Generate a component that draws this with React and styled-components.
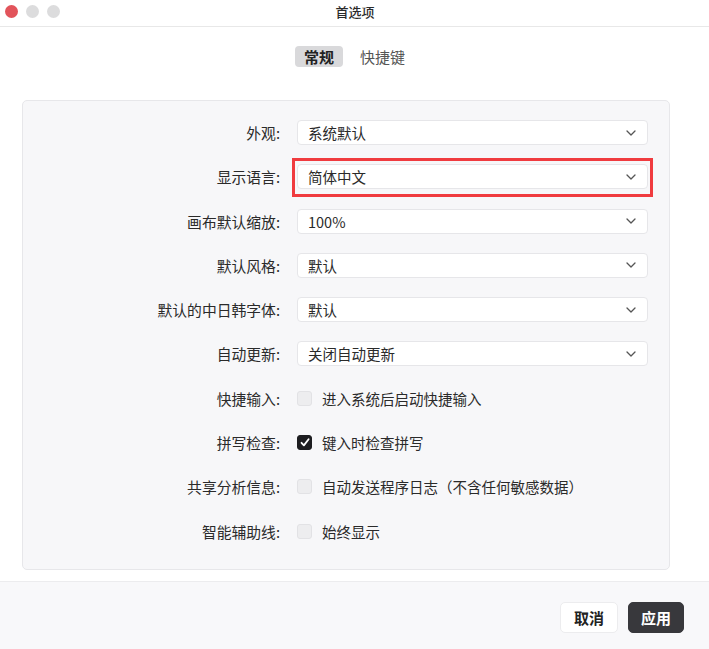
import React from 'react';
import styled, { createGlobalStyle } from 'styled-components';

const GlobalStyle = createGlobalStyle`
  html, body {
    margin: 0;
    padding: 0;
    background: #ffffff;
  }
  body {
    font-family: "Noto Sans CJK SC", "Noto Sans", "Liberation Sans", sans-serif;
    color: #2a2a2a;
  }
`;

const Window = styled.div`
  width: 709px;
  height: 649px;
  background: #ffffff;
  display: flex;
  flex-direction: column;
  overflow: hidden;
`;

const TitleBar = styled.div`
  height: 26px;
  flex-shrink: 0;
  border-bottom: 1px solid #e8e8e8;
  display: grid;
  grid-template-columns: 1fr auto 1fr;
  align-items: center;
  padding: 0 4px 0 5px;
`;

const Lights = styled.div`
  display: flex;
  gap: 8px;
  padding-bottom: 4px;
`;

const Light = styled.span`
  width: 13px;
  height: 13px;
  border-radius: 50%;
  background: ${p => (p.red ? '#e2545b' : '#dcdcdd')};
`;

const Title = styled.div`
  font-size: 13px;
  font-weight: 500;
  color: #2a2a2a;
  padding-bottom: 3px;
`;

const Tabs = styled.div`
  display: flex;
  justify-content: center;
  gap: 8px;
  margin-top: 19px;
  margin-left: 0;
`;

const Tab = styled.div`
  height: 21px;
  padding: 0 9px;
  border-radius: 4px;
  display: flex;
  align-items: center;
  font-size: 15px;
  font-weight: ${p => (p.active ? 700 : 400)};
  color: ${p => (p.active ? '#222' : '#555')};
  background: ${p => (p.active ? '#d9d9db' : 'transparent')};
`;

const Panel = styled.div`
  margin: 33px 39px 0 22px;
  height: 470px;
  box-sizing: border-box;
  background: #f7f7f9;
  border: 1px solid #e7e7ea;
  border-radius: 5px;
  padding: 19px 21px 0 0;
  display: grid;
  grid-template-columns: 257px 1fr;
  grid-auto-rows: 25px;
  column-gap: 17px;
  row-gap: 19.3px;
  align-items: center;
`;

const Label = styled.div`
  text-align: right;
  font-size: 14.8px;
  color: #2a2a2a;
  white-space: nowrap;
`;

const Highlight = styled.div`
  position: relative;
  height: 25px;
  &::after {
    content: '';
    position: absolute;
    top: -6px;
    bottom: -8px;
    left: -5px;
    right: -5px;
    border: 3px solid #f03b3f;
    pointer-events: none;
  }
`;

const SelectBox = styled.div`
  height: 25px;
  box-sizing: border-box;
  background: #ffffff;
  border: 1px solid #e6e6e9;
  border-radius: 4px;
  display: flex;
  align-items: center;
  justify-content: space-between;
  padding: 0 11px 0 10px;
  font-size: 14.5px;
  color: #2a2a2a;
`;

const CheckRow = styled.div`
  display: flex;
  align-items: center;
  gap: 10px;
  font-size: 14.5px;
  color: #2a2a2a;
`;

const Box = styled.span`
  width: 15px;
  height: 15px;
  box-sizing: border-box;
  border-radius: 3px;
  display: flex;
  align-items: center;
  justify-content: center;
  background: ${p => (p.checked ? '#1d1d20' : '#ededef')};
  border: 1px solid ${p => (p.checked ? '#1d1d20' : '#e2e2e5')};
`;

const Footer = styled.div`
  margin-top: 11px;
  flex: 1;
  border-top: 1px solid #ececee;
  background: #f8f8fa;
  display: flex;
  justify-content: flex-end;
  align-items: flex-start;
  gap: 10px;
  padding: 20px 25px 0 0;
`;

const Button = styled.button`
  height: 31px;
  width: ${p => (p.primary ? '56px' : '58px')};
  padding: 0;
  border-radius: 5px;
  font-family: inherit;
  font-size: 15px;
  font-weight: 700;
  cursor: pointer;
  border: 1px solid ${p => (p.primary ? '#38383c' : '#ececee')};
  background: ${p => (p.primary ? '#38383c' : '#ffffff')};
  color: ${p => (p.primary ? '#ffffff' : '#222')};
`;

const Chevron = () => (
  <svg width="10" height="6" viewBox="0 0 10 6">
    <path d="M1 1l4 4 4-4" fill="none" stroke="#555" strokeWidth="1.3" strokeLinecap="round" strokeLinejoin="round" />
  </svg>
);

const Select = ({ value }) => (
  <SelectBox>
    <span>{value}</span>
    <Chevron />
  </SelectBox>
);

const Check = ({ checked, text }) => (
  <CheckRow>
    <Box checked={checked}>
      {checked && (
        <svg width="10" height="9" viewBox="0 0 10 9">
          <path d="M1.5 4.8l2.4 2.6L8.6 1.3" fill="none" stroke="#fff" strokeWidth="1.8" strokeLinecap="round" strokeLinejoin="round" />
        </svg>
      )}
    </Box>
    <span>{text}</span>
  </CheckRow>
);

export default function App() {
  return (
    <Window>
      <GlobalStyle />
      <TitleBar>
        <Lights>
          <Light red />
          <Light />
          <Light />
        </Lights>
        <Title>首选项</Title>
        <div />
      </TitleBar>

      <Tabs>
        <Tab active>常规</Tab>
        <Tab>快捷键</Tab>
      </Tabs>

      <Panel>
        <Label>外观:</Label>
        <Select value="系统默认" />

        <Label>显示语言:</Label>
        <Highlight>
          <Select value="简体中文" />
        </Highlight>

        <Label>画布默认缩放:</Label>
        <Select value="100%" />

        <Label>默认风格:</Label>
        <Select value="默认" />

        <Label>默认的中日韩字体:</Label>
        <Select value="默认" />

        <Label>自动更新:</Label>
        <Select value="关闭自动更新" />

        <Label>快捷输入:</Label>
        <Check text="进入系统后启动快捷输入" />

        <Label>拼写检查:</Label>
        <Check checked text="键入时检查拼写" />

        <Label>共享分析信息:</Label>
        <Check text="自动发送程序日志（不含任何敏感数据）" />

        <Label>智能辅助线:</Label>
        <Check text="始终显示" />
      </Panel>

      <Footer>
        <Button>取消</Button>
        <Button primary>应用</Button>
      </Footer>
    </Window>
  );
}
